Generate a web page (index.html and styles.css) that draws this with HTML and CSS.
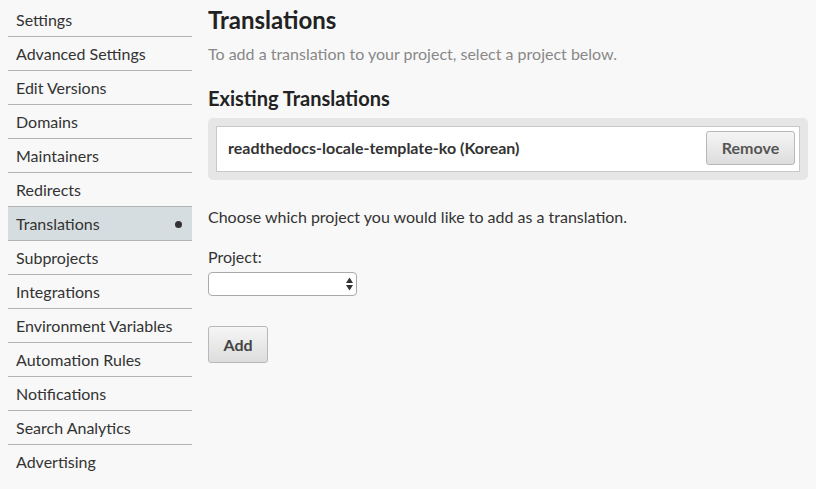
FILE: index.html
```html
<!DOCTYPE html>
<html>
<head>
<meta charset="utf-8">
<link rel="stylesheet" href="styles.css">
</head>
<body>
<div class="page">
  <nav class="sidebar">
    <ul class="menu">
      <li class="item">Settings</li>
      <li class="item">Advanced Settings</li>
      <li class="item">Edit Versions</li>
      <li class="item">Domains</li>
      <li class="item">Maintainers</li>
      <li class="item">Redirects</li>
      <li class="item active">Translations<span class="dot"></span></li>
      <li class="item">Subprojects</li>
      <li class="item">Integrations</li>
      <li class="item">Environment Variables</li>
      <li class="item">Automation Rules</li>
      <li class="item">Notifications</li>
      <li class="item">Search Analytics</li>
      <li class="item">Advertising</li>
    </ul>
  </nav>
  <main class="content">
    <h1 class="title">Translations</h1>
    <p class="help">To add a translation to your project, select a project below.</p>
    <h2 class="subtitle">Existing Translations</h2>
    <div class="well">
      <div class="row">
        <span class="row-name">readthedocs-locale-template-ko (Korean)</span>
        <button class="btn btn-remove">Remove</button>
      </div>
    </div>
    <p class="choose">Choose which project you would like to add as a translation.</p>
    <label class="label">Project:</label>
    <div class="select-wrap">
      <select class="select"><option></option></select>
      <svg class="arrows" width="7" height="14" viewBox="0 0 7 14"><path d="M3.5 0.5L7 6H0Z M3.5 13.5L0 8H7Z" fill="#333"/></svg>
    </div>
    <button class="btn btn-add">Add</button>
  </main>
</div>
</body>
</html>
```
FILE: styles.css
```css
* { box-sizing: border-box; }
html, body { margin: 0; padding: 0; }
body {
  background: #f8f8f8;
  font-family: Lato, "Open Sans", sans-serif;
  color: #333;
  width: 816px;
  height: 489px;
  overflow: hidden;
}
.page {
  display: flex;
  gap: 16px;
  padding: 0 8px;
}
.sidebar { width: 184px; flex: none; }
.menu {
  list-style: none;
  margin: 3px 0 0;
  padding: 0;
}
.item {
  height: 34px;
  border-bottom: 1px solid #b4b4b4;
  padding: 0 8px 1px;
  display: flex;
  align-items: center;
  font-size: 16px;
  color: #333;
}
.item:last-child { border-bottom: none; }
.item.active {
  background: #d6dde0;
  justify-content: space-between;
}
.dot {
  width: 7px;
  height: 7px;
  border-radius: 50%;
  background: #333;
  margin: 2px 2px 0 0;
}
.content { flex: 1; }
.title {
  font-size: 24px;
  font-weight: 700;
  line-height: 28px;
  margin: 6px 0 0;
  color: #222;
}
.help {
  font-size: 16px;
  line-height: 22px;
  color: #888;
  margin: 9px 0 0;
}
.subtitle {
  font-size: 20px;
  font-weight: 700;
  line-height: 24px;
  color: #222;
  margin: 21px 0 0;
}
.well {
  margin-top: 8px;
  background: #e6e6e6;
  border-radius: 5px;
  padding: 8px;
}
.row {
  background: #fff;
  border: 1px solid #c8c8c8;
  height: 46px;
  display: flex;
  align-items: center;
  justify-content: space-between;
  padding: 0 4px 2px 11px;
}
.row-name {
  font-size: 16px;
  font-weight: 700;
  color: #333;
  margin-bottom: 2px;
}
.btn {
  font-family: Lato, "Open Sans", sans-serif;
  background: linear-gradient(#f5f5f5, #dddddd);
  border: 1px solid #b8b8b8;
  border-radius: 3px;
  color: #555;
  padding: 0;
}
.btn-remove {
  width: 89px;
  height: 34px;
  font-size: 16px;
  font-weight: 700;
  padding-bottom: 2px;
}
.choose {
  font-size: 16px;
  line-height: 22px;
  margin: 26px 0 0;
}
.label {
  display: block;
  font-size: 16px;
  line-height: 22px;
  margin-top: 18px;
}
.select-wrap {
  position: relative;
  width: 149px;
  margin-top: 4px;
}
.select {
  appearance: none;
  -webkit-appearance: none;
  display: block;
  width: 149px;
  height: 24px;
  background: #fff;
  border: 1px solid #aaa;
  border-radius: 4px;
  margin: 0;
}
.arrows {
  position: absolute;
  right: 4px;
  top: 5px;
}
.btn-add {
  display: block;
  margin-top: 30px;
  width: 60px;
  height: 37px;
  font-size: 16px;
  font-weight: 700;
  color: #444;
}
```
